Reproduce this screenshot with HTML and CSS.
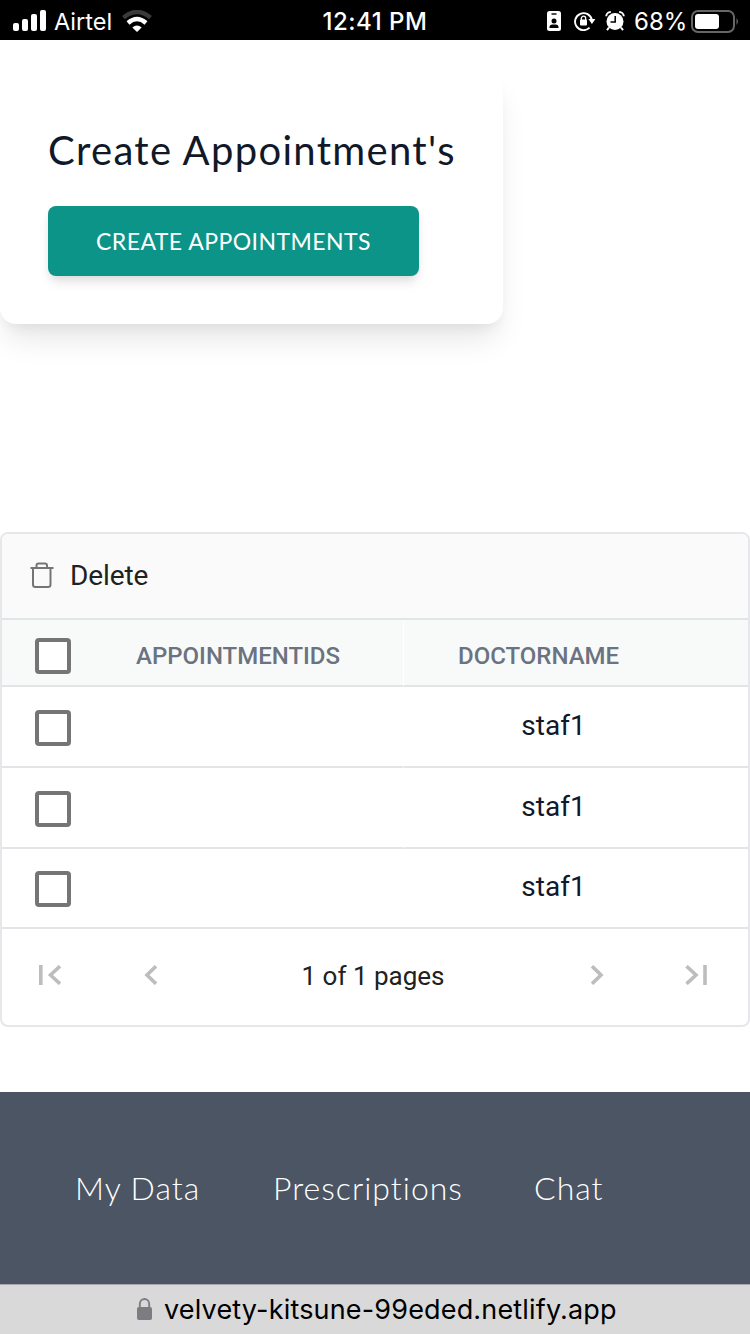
FILE: index.html
```html
<!DOCTYPE html>
<html lang="en">
<head>
<meta charset="utf-8">
<title>Appointments</title>
<link rel="stylesheet" href="styles.css">
</head>
<body>
<header class="status">
  <div class="status-left">
    <svg width="34" height="22" viewBox="0 0 34 22" fill="#fff"><rect x="0" y="13" width="6" height="8" rx="2"/><rect x="9" y="9" width="6" height="12" rx="2"/><rect x="18" y="4" width="6" height="17" rx="2"/><rect x="27" y="0" width="6" height="21" rx="2"/></svg>
    <span class="carrier">Airtel</span>
    <svg class="wifi" width="30" height="22" viewBox="0 0 30 22" fill="none"><path d="M1.500 7.600Q15-3.600 28.500 7.600" stroke="#3a3a3a" stroke-width="4.400"/><path d="M6 13Q15 5 24 13" stroke="#fff" stroke-width="4.400"/><path d="M10.300 17.600Q15 13.600 19.700 17.600L15 22Z" fill="#fff"/></svg>
  </div>
  <span class="clock">12:41 PM</span>
  <div class="status-right">
    <svg width="14" height="20" viewBox="0 0 14 20"><rect width="14" height="20" rx="2.5" fill="#fff"/><path d="M4.500 3h5" stroke="#000" stroke-width="1.400"/><circle cx="7" cy="10" r="2.500" fill="#000"/><path d="M2.500 17v-1.200q0-2.200 2.500-2.400h4q2.500.2 2.500 2.400V17z" fill="#000"/></svg>
    <svg class="rotation" width="22" height="20" viewBox="0 0 22 20"><path d="M15.600 16.600A8.500 8.500 0 1 1 17.900 9" fill="none" stroke="#fff" stroke-width="1.900"/><path d="M14.400 8h7l-3.500 5z" fill="#fff"/><rect x="6" y="8.600" width="7" height="5.800" rx="1" fill="#fff"/><path d="M7.300 9V7.400a2.200 2.200 0 0 1 4.400 0V9" fill="none" stroke="#fff" stroke-width="1.300"/></svg>
    <svg class="alarm" width="20" height="20" viewBox="0 0 20 20"><circle cx="10" cy="10.600" r="8.500" fill="#fff"/><path d="M1.200 5.200A4.500 4.500 0 0 1 5.800 1M18.800 5.200A4.500 4.500 0 0 0 14.200 1" stroke="#fff" stroke-width="2" fill="none"/><path d="M4 16.500l-2 2.700M16 16.500l2 2.700" stroke="#fff" stroke-width="2"/><path d="M10.200 5v6H5.500" stroke="#000" stroke-width="1.500" fill="none"/></svg>
    <span class="percent">68%</span>
    <svg class="battery" width="48" height="23" viewBox="0 0 48 23"><rect x="1" y="1" width="42" height="21" rx="6" fill="none" stroke="#666" stroke-width="2"/><rect x="4" y="4" width="24" height="15" rx="3" fill="#fff"/><path d="M45.500 8q3 3.500 0 7z" fill="#666"/></svg>
  </div>
</header>

<main>
  <section class="card">
    <h1 class="card-title">Create Appointment's</h1>
    <button class="create">CREATE APPOINTMENTS</button>
  </section>

  <section class="grid">
    <div class="toolbar">
      <svg width="24" height="26" viewBox="0 0 24 26" fill="none" stroke="#757575" stroke-width="2"><path d="M.5 6h23M3 6v16.500a2.500 2.500 0 0 0 2.500 2.500h12.500a2.500 2.500 0 0 0 2.500-2.500V6M6.500 6V3.500a2 2 0 0 1 2-2h6.500a2 2 0 0 1 2 2V6"/></svg>
      <span class="delete">Delete</span>
    </div>
    <div class="row head">
      <div class="cell check"><span class="box"></span></div>
      <div class="cell ids">APPOINTMENTIDS</div>
      <div class="cell doctor">DOCTORNAME</div>
    </div>
    <div class="row"><div class="cell check"><span class="box"></span></div><div class="cell ids"></div><div class="cell doctor">staf1</div></div>
    <div class="row"><div class="cell check"><span class="box"></span></div><div class="cell ids"></div><div class="cell doctor">staf1</div></div>
    <div class="row last"><div class="cell check"><span class="box"></span></div><div class="cell ids"></div><div class="cell doctor">staf1</div></div>
    <div class="pager">
      <svg width="24" height="20" viewBox="0 0 24 20" fill="none" stroke="#bdbdbd" stroke-width="3.600"><path d="M2.800 0v20M22 1.200L12.500 10l9.500 8.800"/></svg>
      <svg class="prev" width="14" height="20" viewBox="0 0 14 20" fill="none" stroke="#bdbdbd" stroke-width="3.600"><path d="M12 1.200L3 10l9 8.800"/></svg>
      <span class="pages">1 of 1 pages</span>
      <svg class="next" width="14" height="20" viewBox="0 0 14 20" fill="none" stroke="#bdbdbd" stroke-width="3.600"><path d="M2 1.200L11 10l-9 8.800"/></svg>
      <svg class="end" width="24" height="20" viewBox="0 0 24 20" fill="none" stroke="#bdbdbd" stroke-width="3.600"><path d="M21 0v20M2.500 1.200L12 10l-9.500 8.800"/></svg>
    </div>
  </section>
</main>

<footer class="footer">
  <a class="link">My Data</a>
  <a class="link">Prescriptions</a>
  <a class="link">Chat</a>
</footer>
<div class="address">
  <svg width="15" height="22" viewBox="0 0 16 22" preserveAspectRatio="none"><rect x="0" y="9" width="16" height="13" rx="2" fill="#7d7c80"/><path d="M3 10V6a5 5 0 0 1 10 0v4" fill="none" stroke="#7d7c80" stroke-width="2"/></svg>
  <span class="url">velvety-kitsune-99eded.netlify.app</span>
</div>
</body>
</html>
```
FILE: styles.css
```css
* { box-sizing: border-box; }
body { margin: 0; height: 1334px; background: #fff; display: flex; flex-direction: column; overflow: hidden; font-family: Roboto, sans-serif; }
svg { flex: none; display: block; }
span, a, h1 { white-space: nowrap; }
.status { height: 40px; flex: none; background: #000; color: #fff; display: grid; grid-template-columns: 1fr 108px 1fr; align-items: center; font-family: Inter, sans-serif; font-size: 24px; line-height: 40px; }
.status-left { display: flex; align-items: center; padding-left: 13px; }
.carrier { margin-left: 7px; width: 59px; padding-top: 2px; font-size: 23.5px; }
.wifi { margin-left: 9px; }
.clock { padding-top: 2px; font-weight: 500; font-size: 24px; text-align: center; letter-spacing: .5px; }
.status-right { display: flex; align-items: center; padding-left: 118px; }
.rotation { margin-left: 13px; }
.alarm { margin-left: 9px; }
.percent { margin-left: 9px; padding-top: 2px; width: 53px; }
.battery { margin-left: 4px; }

main { flex: none; height: 1052px; padding-top: 32px; }
.card { width: 503px; height: 252px; padding: 48px; border-radius: 16px; background: #fff; box-shadow: 0 20px 30px -6px rgba(0,0,0,.1), 0 8px 12px -4px rgba(0,0,0,.05); }
.card-title { margin: 0; height: 86px; font: 400 40px/60px Lato, sans-serif; letter-spacing: 1.32px; color: #111827; }
.create { display: block; width: 371px; height: 70px; padding: 0; border: 0; border-radius: 8px; background: #0d9488; color: #fff; font: 400 23px/70px Lato, sans-serif; letter-spacing: .45px; box-shadow: 0 8px 12px -2px rgba(0,0,0,.1), 0 4px 8px -2px rgba(0,0,0,.06); }

.grid { margin-top: 208px; height: 495px; border: 2px solid #e5e7eb; border-radius: 8px; background: #fff; overflow: hidden; }
.toolbar { height: 86px; border-bottom: 2px solid #e2e4e7; background: #fafafa; display: flex; align-items: center; padding: 0 0 2px 28px; }
.delete { margin-left: 16px; font-size: 28px; letter-spacing: -.1px; color: #212121; }
.row { height: 81px; display: grid; grid-template-columns: 102px 300px 1fr; color: #111827; }
.cell { border-bottom: 2px solid #e2e4e7; display: flex; align-items: center; }
.head { height: 67px; color: #6b7280; background: #f8faf9; }
.head .cell { font-size: 24px; font-weight: 500; }
.ids { padding-left: 32px; border-right: 1px solid #fff; }
.last { height: 80px; }
.last .ids { border-right: 0; }
.check { padding: 2px 0 0 33px; }
.head .check { padding-top: 7px; }
.box { width: 36px; height: 36px; border: 4px solid #757575; border-radius: 4px; background: #fff; }
.doctor { justify-content: center; padding: 0 45px 3px 0; font-size: 28px; }
.head .doctor { padding: 0 0 0 54px; justify-content: flex-start; }
.head .ids, .head .doctor { padding-top: 7px; }
.pager { height: 96px; display: flex; align-items: center; padding: 0 40px 5px 36px; }
.prev { margin-left: 82px; }
.pages { flex: 1; text-align: center; padding: 3px 2px 0 0; font-size: 26px; color: #212121; }
.end { margin-left: 80px; }

.footer { height: 192px; flex: none; background: #4b5563; color: #fff; display: grid; grid-template-columns: 198px 261px 1fr; align-items: center; padding: 0 0 0 75px; font: 300 32px/48px Lato, sans-serif; }
.link { letter-spacing: 1px; }
.address { height: 50px; flex: none; border-top: 1px solid #a6a9ae; background: #d9d9d9; display: flex; align-items: center; padding: 0 0 2px 137px; gap: 12px; font: 400 27px/48px Inter, sans-serif; color: #000; }
.url { padding-top: 2px; letter-spacing: .17px; }
```
